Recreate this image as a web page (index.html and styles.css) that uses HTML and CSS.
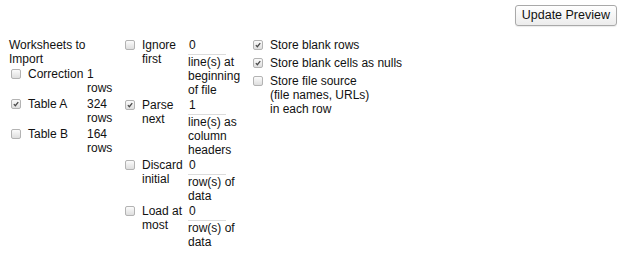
FILE: index.html
```html
<!DOCTYPE html>
<html>
<head>
<meta charset="utf-8">
<link rel="stylesheet" href="styles.css">
</head>
<body>
<div class="toolbar"><button class="update">Update Preview</button></div>
<div class="options">
  <div class="col col1">
    <div class="head">Worksheets to Import</div>
    <table class="sheets">
      <tr><td class="c"><span class="cb"></span></td><td class="name">Correction</td><td class="count">1 rows</td></tr>
      <tr><td class="c"><span class="cb on"><svg viewBox="0 0 10 10"><path d="M2.3 5.2 L4.2 7.2 L7.8 2.6" /></svg></span></td><td class="name">Table A</td><td class="count">324 rows</td></tr>
      <tr><td class="c"><span class="cb"></span></td><td class="name">Table B</td><td class="count">164 rows</td></tr>
    </table>
  </div>
  <div class="col col2">
    <table class="parse">
      <tr>
        <td class="c"><span class="cb"></span></td>
        <td class="lbl">Ignore first</td>
        <td class="val"><div class="num">0</div><div class="txt">line(s) at beginning of file</div></td>
      </tr>
      <tr>
        <td class="c"><span class="cb on"><svg viewBox="0 0 10 10"><path d="M2.3 5.2 L4.2 7.2 L7.8 2.6" /></svg></span></td>
        <td class="lbl">Parse next</td>
        <td class="val"><div class="num">1</div><div class="txt">line(s) as column headers</div></td>
      </tr>
      <tr>
        <td class="c"><span class="cb"></span></td>
        <td class="lbl">Discard initial</td>
        <td class="val"><div class="num">0</div><div class="txt">row(s) of data</div></td>
      </tr>
      <tr>
        <td class="c"><span class="cb"></span></td>
        <td class="lbl">Load at most</td>
        <td class="val"><div class="num">0</div><div class="txt">row(s) of data</div></td>
      </tr>
    </table>
  </div>
  <div class="col col3">
    <div class="opt"><span class="cb on"><svg viewBox="0 0 10 10"><path d="M2.3 5.2 L4.2 7.2 L7.8 2.6" /></svg></span><span class="otext">Store blank rows</span></div>
    <div class="opt"><span class="cb on"><svg viewBox="0 0 10 10"><path d="M2.3 5.2 L4.2 7.2 L7.8 2.6" /></svg></span><span class="otext">Store blank cells as nulls</span></div>
    <div class="opt"><span class="cb"></span><span class="otext">Store file source<br>(file names, URLs)<br>in each row</span></div>
  </div>
</div>
</body>
</html>
```
FILE: styles.css
```css
html, body {
  margin: 0;
  padding: 0;
  background: #fff;
}
body {
  font-family: "Liberation Sans", Arial, sans-serif;
  font-size: 12px;
  line-height: 14px;
  color: #111;
}
.toolbar {
  display: flex;
  justify-content: flex-end;
  padding: 5px 8px 0 0;
  height: 33px;
}
.update {
  font-family: "Liberation Sans", Arial, sans-serif;
  font-size: 12.5px;
  line-height: 15px;
  color: #111;
  height: 21px;
  padding: 0 6px;
  border: 1px solid #a9a9a9;
  border-radius: 3px;
  background: linear-gradient(#ffffff, #ececec);
  box-shadow: 0 1px 1px rgba(0,0,0,0.08);
}
.options {
  display: flex;
  align-items: flex-start;
  padding-left: 9px;
}
.col1 { width: 115px; }
.col2 { width: 126px; }
.head { width: 80px; }
table { border-collapse: collapse; }
td { padding: 0; vertical-align: top; }
.cb {
  display: inline-block;
  box-sizing: border-box;
  width: 10px;
  height: 10px;
  border: 1px solid #b3b3b3;
  border-radius: 2px;
  background: linear-gradient(#fbfbfb, #dedede);
  vertical-align: top;
}
.cb svg {
  display: block;
  width: 8px;
  height: 8px;
}
.cb svg path {
  fill: none;
  stroke: #4a4a4a;
  stroke-width: 1.6;
}
.sheets { margin-top: 1px; }
.sheets td { padding-bottom: 2px; }
.sheets .c { width: 17px; padding-left: 2px; padding-top: 2px; }
.sheets .name { width: 59px; }
.sheets .count { width: 26px; }
.parse .c { width: 17px; padding-left: 1px; padding-top: 2px; }
.parse .lbl { width: 46px; }
.parse .val { width: 54px; padding-bottom: 1px; }
.num {
  width: 37px;
  height: 14px;
  padding: 0 0 2px 1px;
  border-bottom: 1px solid #dcdcdc;
}
.opt {
  display: flex;
  align-items: flex-start;
  margin-bottom: 4px;
}
.opt .cb { margin: 2px 7px 0 3px; }
```
